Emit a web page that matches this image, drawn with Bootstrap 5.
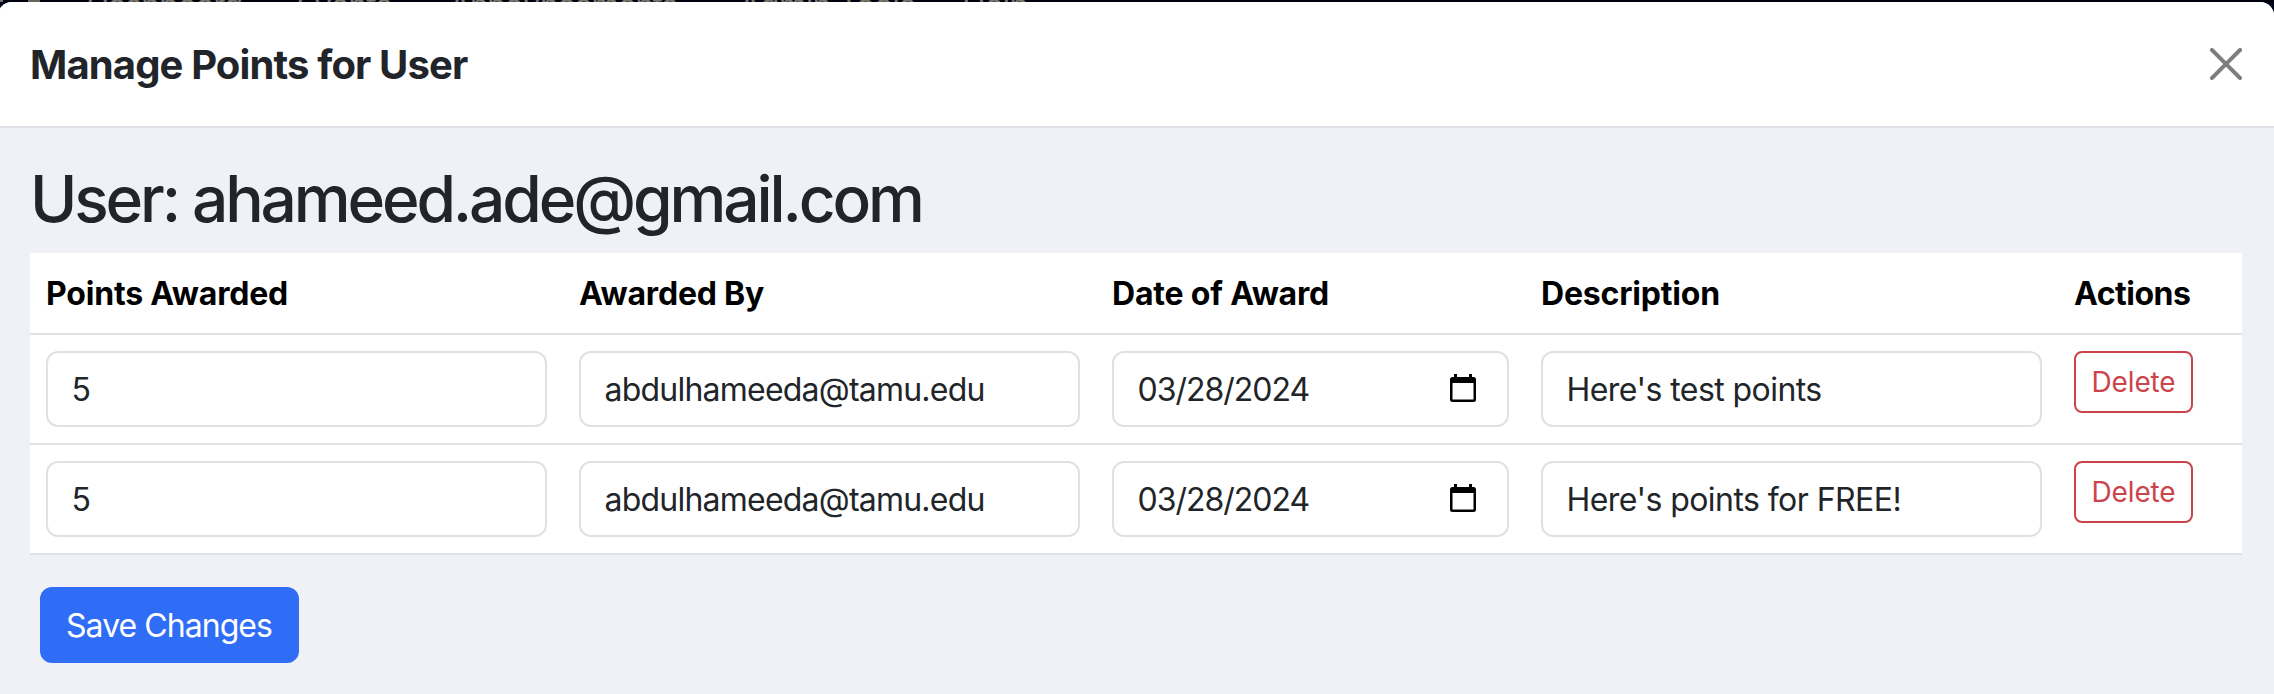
<!DOCTYPE html>
<html lang="en">
<head>
<meta charset="utf-8">
<title>Manage Points</title>
<link href="https://cdn.jsdelivr.net/npm/bootstrap@5.3.0/dist/css/bootstrap.min.css" rel="stylesheet">
<style>
html { font-size: 32px; }
body { font-family: Inter, "Liberation Sans", sans-serif; background: #02061a; overflow: hidden; color: #212529; height: 694px; }
.topnav { height: 2px; background: #00000f; overflow: hidden; color: #77756f; white-space: nowrap; }
.topnav-row { height: 48px; margin-top: -18px; line-height: 48px; }
.topnav-row span { flex: none; letter-spacing: -.03em; }
.topnav-row .brand-a { width: 3px; background: #77756f; }
.topnav-row .brand-b { width: 12px; margin-left: 25px; background: #66645f; }
.panel { margin-left: -2px; height: 692px; background: #f0f1f6; border-radius: 14px 14px 0 0; overflow: hidden; }
.panel .modal-header { background: #fff; border-bottom: 2px solid #dee2e6; border-radius: 0; padding: 32px; height: 126px; }
.panel .modal-title { font-size: 40px; font-weight: 700; letter-spacing: -.0216em; line-height: 60px; padding-top: 2px; }
.panel .modal-body { padding: 32px; }
.panel .btn-close { padding: 16px; margin: -16px -16px -16px auto; }
.user-title { font-size: 64px; font-weight: 550; letter-spacing: -.0488em; padding-top: 1px; margin-bottom: 15px; line-height: 76.8px; }
.points-table { table-layout: fixed; width: 2212px; margin-bottom: 32px; --bs-table-color: #000; --bs-table-bg: #fff; }
.points-table > :not(caption) > * > * { padding: 16px; border-bottom-width: 2px; }
.points-table > thead > tr > th { letter-spacing: -.006em; padding-top: 17px; padding-bottom: 15px; }
.points-table > thead > tr > th:last-child { letter-spacing: -.015em; }
.points-table td { height: 110px; }
.points-table .form-control { border: 2px solid #dee2e6; border-radius: 12px; padding: 13px 24px 11px 23.5px; height: 76px; letter-spacing: -.0243em; color: #212529; background: #fff; }
.points-table .field-date { letter-spacing: -.0314em; }
.points-table .field-desc { letter-spacing: -.0175em; }
.cal { position: absolute; right: 33px; top: 23px; }
.btn-outline-danger { --bs-btn-color: #cc444b; --bs-btn-border-color: #cc444b; border-width: 2px; border-radius: 8px; padding: 8px 0; width: 119px; font-size: 28px; display: block; line-height: 42px; letter-spacing: -.004em; }
.btn-save { --bs-btn-bg: #306df6; --bs-btn-border-color: #306df6; border-width: 2px; border-radius: 12px; margin-left: 10px; width: 259px; height: 76px; padding: 13px 1px 11px 0; letter-spacing: -.0298em; }
</style>
</head>
<body>
<nav class="topnav">
  <div class="topnav-row d-flex">
    <i class="brand-a"></i><i class="brand-b"></i>
    <span style="margin-left:46px;width:210px">Dashboard</span>
    <span style="width:153px">Events</span>
    <span style="width:290px;letter-spacing:-.045em">Announcements</span>
    <span style="width:223px">Admin Tools</span>
    <span>Help</span>
  </div>
</nav>
<main class="panel">
  <div class="modal-header">
    <h5 class="modal-title">Manage Points for User</h5>
    <button type="button" class="btn-close" aria-label="Close"></button>
  </div>
  <div class="modal-body">
    <h2 class="user-title">User: ahameed.ade@gmail.com</h2>
    <table class="table points-table">
      <colgroup><col style="width:533px"><col style="width:533px"><col style="width:429px"><col style="width:533px"><col style="width:184px"></colgroup>
      <thead>
        <tr><th>Points Awarded</th><th>Awarded By</th><th>Date of Award</th><th>Description</th><th>Actions</th></tr>
      </thead>
      <tbody>
        <tr>
          <td><input class="form-control" value="5"></td>
          <td><input class="form-control" value="abdulhameeda@tamu.edu"></td>
          <td><div class="position-relative"><input class="form-control field-date" value="03/28/2024">
            <svg class="cal" width="26" height="28" viewBox="0 0 26 28"><path fill-rule="evenodd" d="M4 0h3v3h12V0h3v3h1.5A2.5 2.5 0 0 1 26 5.500V25.500A2.500 2.500 0 0 1 23.500 28H2.500A2.500 2.500 0 0 1 0 25.500V5.500A2.500 2.500 0 0 1 2.500 3H4zM2.500 9V25.500H23.500V9z"/></svg></div></td>
          <td><input class="form-control field-desc" value="Here's test points"></td>
          <td><button type="button" class="btn btn-outline-danger btn-sm">Delete</button></td>
        </tr>
        <tr>
          <td><input class="form-control" value="5"></td>
          <td><input class="form-control" value="abdulhameeda@tamu.edu"></td>
          <td><div class="position-relative"><input class="form-control field-date" value="03/28/2024">
            <svg class="cal" width="26" height="28" viewBox="0 0 26 28"><path fill-rule="evenodd" d="M4 0h3v3h12V0h3v3h1.5A2.5 2.5 0 0 1 26 5.500V25.500A2.500 2.500 0 0 1 23.500 28H2.500A2.500 2.500 0 0 1 0 25.500V5.500A2.500 2.500 0 0 1 2.500 3H4zM2.500 9V25.500H23.500V9z"/></svg></div></td>
          <td><input class="form-control field-desc" value="Here's points for FREE!"></td>
          <td><button type="button" class="btn btn-outline-danger btn-sm">Delete</button></td>
        </tr>
      </tbody>
    </table>
    <button type="button" class="btn btn-primary btn-save">Save Changes</button>
  </div>
</main>
<script src="https://cdn.jsdelivr.net/npm/bootstrap@5.3.0/dist/js/bootstrap.bundle.min.js"></script>
</body>
</html>
